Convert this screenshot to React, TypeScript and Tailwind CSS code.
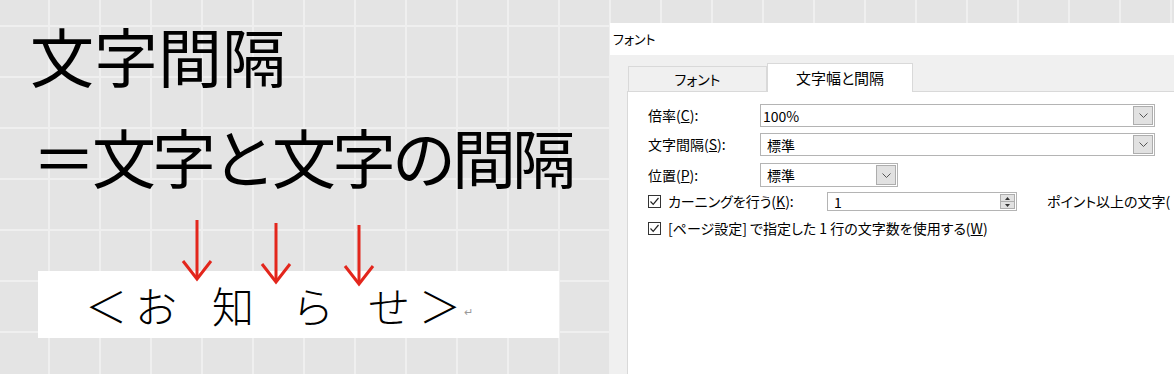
import React from "react";

const Chevron = () => (
  <svg width="9" height="5" viewBox="0 0 9 5" fill="none">
    <path d="M0.5 0.5 L4.5 4.5 L8.5 0.5" stroke="#555" strokeWidth="1" />
  </svg>
);

const Combo = ({ value, w, pad }: { value: string; w: string; pad: string }) => (
  <div className={`${w} h-full flex border border-[#b4b4b4] bg-white`}>
    <span className={`${pad} flex-1 self-center leading-none`}>{value}</span>
    <span className="w-[20px] m-px flex items-center justify-center bg-[#e1e1e1] border border-[#adadad]">
      <Chevron />
    </span>
  </div>
);

const Check = () => (
  <span className="w-[13px] h-[13px] shrink-0 border border-[#333] bg-white flex items-center justify-center">
    <svg width="11" height="11" viewBox="0 0 11 11" fill="none">
      <path d="M1.5 5.5 L4.2 8.3 L9.5 2" stroke="#222" strokeWidth="1.2" />
    </svg>
  </span>
);

const Arrow = ({ left, top }: { left: string; top: string }) => (
  <svg
    className={`absolute ${left} ${top}`}
    width="32"
    height="62"
    viewBox="0 0 32 62"
    fill="none"
  >
    <path d="M16 0 V59" stroke="#e3261c" strokeWidth="3" />
    <path d="M2 41 L16 59 L30 41" stroke="#e3261c" strokeWidth="3" />
  </svg>
);

export default function App() {
  return (
    <div className="w-[1174px] h-[374px] overflow-hidden flex bg-[#e4e4e4] bg-[linear-gradient(to_right,#efefef_2px,transparent_2px),linear-gradient(to_bottom,#efefef_2px,transparent_2px)] [background-size:51px_51px] [background-position:48px_25px] font-['Noto_Sans_CJK_JP',sans-serif] text-black">
      {/* Left: slide text */}
      <div className="w-[610px] shrink-0 relative flex flex-col">
        <div className="pt-[22px] pl-[30px] text-[64px] leading-none">文字間隔</div>
        <div className="mt-[37px] pl-[32px] text-[64px] leading-none whitespace-nowrap tracking-[-4px]">
          ＝文字と文字の間隔
        </div>
        <div className="mt-[84px] ml-[38px] w-[521px] h-[67px] bg-white flex items-center pl-[47px] text-[42px] font-light leading-none">
          <span className="w-[42px] text-center">＜</span>
          <span className="w-[42px] ml-[8px] text-center">お</span>
          <span className="w-[42px] ml-[35px] text-center">知</span>
          <span className="w-[42px] ml-[38px] text-center">ら</span>
          <span className="w-[42px] ml-[34px] text-center">せ</span>
          <span className="w-[42px] ml-[9px] text-center">＞</span>
          <span className="ml-[3px] mt-[14px] text-[11px] text-[#9a9a9a]">↵</span>
        </div>
        <Arrow left="left-[181px]" top="top-[220px]" />
        <Arrow left="left-[260px]" top="top-[223px]" />
        <Arrow left="left-[343px]" top="top-[225px]" />
      </div>

      {/* Right: font dialog */}
      <div className="flex-1 mt-[23px] flex flex-col bg-[#f0f0f0] text-[14px] [font-feature-settings:'palt']">
        <div className="h-[32px] shrink-0 bg-white flex items-center pl-[3px] text-[13px]">フォント</div>
        <div className="flex-1 flex flex-col pt-[7px] pl-[17px]">
          <div className="h-[29px] flex items-end shrink-0">
            <div className="ml-px w-[139px] h-[25px] border border-b-0 border-[#d9d9d9] flex items-center justify-center">
              フォント
            </div>
            <div className="w-[146px] h-[29px] -mb-px relative z-10 bg-white border border-b-0 border-[#d9d9d9] flex items-center justify-center text-[15px]">
              文字幅と間隔
            </div>
          </div>
          <div className="flex-1 bg-white border border-r-0 border-b-0 border-[#d9d9d9] pl-[20px] pt-[12px] whitespace-nowrap overflow-hidden">
            <div className="h-[23px] flex items-center">
              <span className="w-[112px]">倍率(<span className="underline">C</span>):</span>
              <Combo value="100%" w="w-[395px]" pad="pl-[2px]" />
            </div>
            <div className="mt-[6px] h-[23px] flex items-center">
              <span className="w-[112px]">文字間隔(<span className="underline">S</span>):</span>
              <Combo value="標準" w="w-[395px]" pad="pl-[6px]" />
            </div>
            <div className="mt-[7px] h-[24px] flex items-center">
              <span className="w-[112px]">位置(<span className="underline">P</span>):</span>
              <Combo value="標準" w="w-[138px]" pad="pl-[6px]" />
            </div>
            <div className="mt-[5px] h-[19px] flex items-center">
              <span className="w-[179px] flex items-center">
                <Check />
                <span className="ml-[7px]">カーニングを行う(<span className="underline">K</span>):</span>
              </span>
              <div className="w-[190px] h-full flex border border-[#b4b4b4] bg-white">
                <span className="flex-1 pl-[6px] self-center leading-none">1</span>
                <span className="w-[15px] m-px flex flex-col bg-[#e1e1e1] border border-[#adadad]">
                  <span className="flex-1 flex items-center justify-center border-b border-[#adadad]">
                    <svg width="5" height="3" viewBox="0 0 5 3"><path d="M0 3 L2.5 0 L5 3 Z" fill="#333" /></svg>
                  </span>
                  <span className="flex-1 flex items-center justify-center">
                    <svg width="5" height="3" viewBox="0 0 5 3"><path d="M0 0 L2.5 3 L5 0 Z" fill="#333" /></svg>
                  </span>
                </span>
              </div>
              <span className="ml-[30px]">ポイント以上の文字(</span>
            </div>
            <div className="mt-[8px] h-[18px] flex items-center">
              <Check />
              <span className="ml-[7px]">
                [ページ設定] で指定した 1 行の文字数を使用する(<span className="underline">W</span>)
              </span>
            </div>
          </div>
        </div>
      </div>
    </div>
  );
}
